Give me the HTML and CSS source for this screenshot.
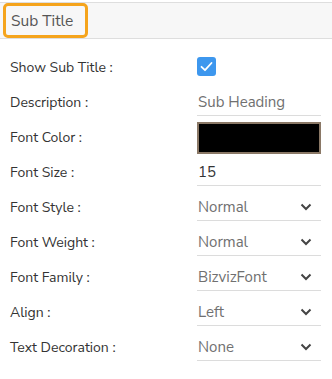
FILE: index.html
```html
<!DOCTYPE html>
<html>
<head>
<meta charset="utf-8">
<link rel="stylesheet" href="styles.css">
</head>
<body>
<div class="panel">
  <div class="header">
    <div class="tab">Sub Title</div>
  </div>
  <div class="rows">
    <div class="row">
      <div class="label">Show Sub Title :</div>
      <div class="value">
        <span class="checkbox"><svg width="19" height="19" viewBox="0 0 19 19"><rect x="0" y="0" width="19" height="19" rx="3" fill="#3d97ee"/><path d="M4.5 9.8 L8 13.2 L14.5 6" fill="none" stroke="#fff" stroke-width="1.8" stroke-linecap="round" stroke-linejoin="round"/></svg></span>
      </div>
    </div>
    <div class="row">
      <div class="label">Description :</div>
      <div class="value field"><span class="muted">Sub Heading</span></div>
    </div>
    <div class="row">
      <div class="label">Font Color :</div>
      <div class="value"><div class="color"></div></div>
    </div>
    <div class="row">
      <div class="label">Font Size :</div>
      <div class="value field"><span class="dark">15</span></div>
    </div>
    <div class="row">
      <div class="label">Font Style :</div>
      <div class="value field select"><span class="muted">Normal</span><svg class="chev" width="12" height="8" viewBox="0 0 12 8"><path d="M1.5 1.5 L6 6 L10.5 1.5" fill="none" stroke="#444" stroke-width="2"/></svg></div>
    </div>
    <div class="row">
      <div class="label">Font Weight :</div>
      <div class="value field select"><span class="muted">Normal</span><svg class="chev" width="12" height="8" viewBox="0 0 12 8"><path d="M1.5 1.5 L6 6 L10.5 1.5" fill="none" stroke="#444" stroke-width="2"/></svg></div>
    </div>
    <div class="row">
      <div class="label">Font Family :</div>
      <div class="value field select"><span class="muted">BizvizFont</span><svg class="chev" width="12" height="8" viewBox="0 0 12 8"><path d="M1.5 1.5 L6 6 L10.5 1.5" fill="none" stroke="#444" stroke-width="2"/></svg></div>
    </div>
    <div class="row">
      <div class="label">Align :</div>
      <div class="value field select"><span class="muted">Left</span><svg class="chev" width="12" height="8" viewBox="0 0 12 8"><path d="M1.5 1.5 L6 6 L10.5 1.5" fill="none" stroke="#444" stroke-width="2"/></svg></div>
    </div>
    <div class="row">
      <div class="label">Text Decoration :</div>
      <div class="value field select"><span class="muted">None</span><svg class="chev" width="12" height="8" viewBox="0 0 12 8"><path d="M1.5 1.5 L6 6 L10.5 1.5" fill="none" stroke="#444" stroke-width="2"/></svg></div>
    </div>
  </div>
</div>
</body>
</html>
```
FILE: styles.css
```css
* { box-sizing: border-box; }
html, body { margin: 0; padding: 0; background: #fff; }
body {
  font-family: "Nunito Sans", Lato, "Open Sans", sans-serif;
  width: 332px;
  height: 379px;
  overflow: hidden;
}
.panel { padding-top: 2px; }
.header {
  height: 37px;
  background: #f7f7f7;
  border-top: 1px solid #dedede;
  border-bottom: 1px solid #dedede;
  padding: 0 0 0 3px;
  display: flex;
  align-items: flex-start;
}
.tab {
  height: 35px;
  width: 85px;
  border: 3px solid #f5a41c;
  border-radius: 5px;
  padding-left: 5px;
  font-size: 15.5px;
  color: #555;
  display: flex;
  align-items: center;
}
.rows { padding: 11px 11px 0 10px; }
.row {
  height: 35px;
  display: flex;
  align-items: stretch;
}
.label {
  width: 187px;
  font-size: 14px;
  color: #333;
  display: flex;
  align-items: center;
  padding-bottom: 1px;
}
.value {
  flex: 1;
  display: flex;
  align-items: center;
}
.field {
  border-bottom: 1px solid #dcdcdc;
  padding-left: 1px;
  font-size: 15px;
  margin-bottom: 4px;
  padding-top: 4px;
}
.select { justify-content: space-between; padding-right: 9px; }
.muted { color: #707070; }
.dark { color: #333; }
.checkbox { display: block; height: 19px; margin-top: -2px; }
.checkbox svg { display: block; }
.color {
  width: 100%;
  height: 32px;
  border: 2px solid #8a7866;
  background: #000;
}
.chev { display: block; }
```
